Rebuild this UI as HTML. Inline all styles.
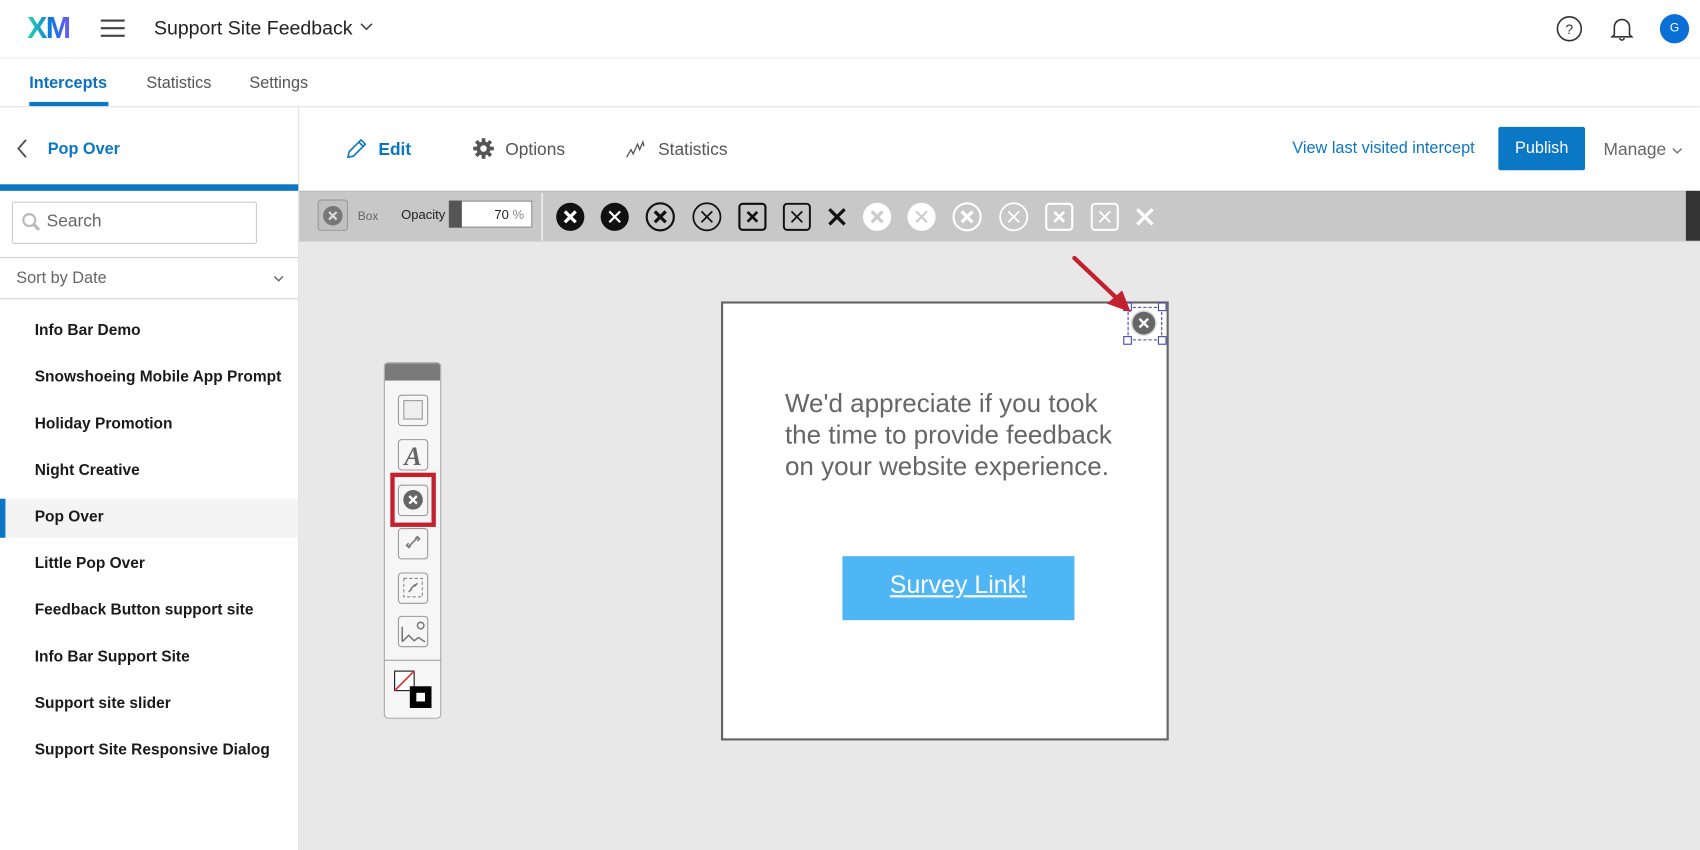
<!DOCTYPE html>
<html><head><meta charset="utf-8">
<style>
*{margin:0;padding:0;box-sizing:border-box}
html,body{width:1700px;height:850px;overflow:hidden;background:#fff}
body{font-family:"Liberation Sans",sans-serif}
#w{position:absolute;left:0;top:0;width:1568px;height:784px;transform:scale(1.08418);transform-origin:0 0;background:#fff}
.a{position:absolute}
.t{position:absolute;white-space:nowrap}
.li{position:absolute;left:32px;font-size:14.3px;font-weight:bold;color:#1a1a1a}
</style></head><body><div id="w">
<!-- top bar -->
<div class="t" style="left:25px;top:10px;font-size:28px;font-weight:bold;letter-spacing:-1.5px;background:linear-gradient(90deg,#21dbaa,#0b78e0 55%,#6b5cf0);-webkit-background-clip:text;color:transparent">XM</div>
<div class="a" style="left:93px;top:18px;width:22px;height:2px;background:#444"></div>
<div class="a" style="left:93px;top:25px;width:22px;height:2px;background:#444"></div>
<div class="a" style="left:93px;top:32px;width:22px;height:2px;background:#444"></div>
<div class="t" style="left:142px;top:16px;font-size:18px;color:#222">Support Site Feedback</div>
<svg class="a" style="left:331px;top:20px" width="14" height="10"><path d="M2 2l5 5 5-5" fill="none" stroke="#444" stroke-width="1.5"/></svg>
<svg class="a" style="left:1435px;top:14px" width="25" height="25"><circle cx="12.5" cy="12.5" r="11" fill="none" stroke="#333" stroke-width="1.5"/><text x="12.5" y="17.5" font-size="13" text-anchor="middle" fill="#333" font-family="Liberation Sans">?</text></svg>
<svg class="a" style="left:1485px;top:14px" width="22" height="25"><path d="M4 18V11a7 7 0 0 1 14 0v7l2 2H2z" fill="none" stroke="#333" stroke-width="1.5"/><path d="M9 21a2 2 0 0 0 4 0" fill="none" stroke="#333" stroke-width="1.5"/></svg>
<div class="a" style="left:1531px;top:13px;width:27px;height:27px;border-radius:50%;background:#0b6fd8;color:#fff;font-size:11px;text-align:center;line-height:27px">G</div>
<div class="a" style="left:0;top:53px;width:1568px;height:1px;background:#ececec"></div>
<!-- tabs -->
<div class="t" style="left:27px;top:68px;font-size:15px;font-weight:bold;color:#0b6fc4">Intercepts</div>
<div class="t" style="left:135px;top:68px;font-size:15px;color:#555">Statistics</div>
<div class="t" style="left:230px;top:68px;font-size:15px;color:#555">Settings</div>
<div class="a" style="left:27px;top:94px;width:73px;height:4px;background:#0b76c4"></div>
<div class="a" style="left:0;top:98px;width:1568px;height:1px;background:#e4e4e4"></div>
<!-- sidebar -->
<div class="a" style="left:275px;top:98px;width:1px;height:686px;background:#ddd"></div>
<svg class="a" style="left:14px;top:127px" width="14" height="20"><path d="M10 2L3 10l7 8" fill="none" stroke="#555" stroke-width="1.8"/></svg>
<div class="t" style="left:44px;top:129px;font-size:15px;font-weight:bold;color:#0b76c4">Pop Over</div>
<div class="a" style="left:0;top:170px;width:275px;height:6px;background:#0b76c4"></div>
<div class="a" style="left:11px;top:186px;width:226px;height:39px;border:1px solid #ccc;border-radius:2px"></div>
<svg class="a" style="left:19px;top:195px" width="20" height="20"><circle cx="8" cy="8" r="5.5" fill="none" stroke="#bbb" stroke-width="2"/><path d="M12 12l5 5" stroke="#bbb" stroke-width="3"/></svg>
<div class="t" style="left:43px;top:196px;font-size:16px;color:#666">Search</div>
<div class="a" style="left:0;top:237px;width:275px;height:1px;background:#d4d4d4"></div>
<div class="t" style="left:15px;top:248px;font-size:15px;color:#666">Sort by Date</div>
<svg class="a" style="left:251px;top:252px" width="12" height="10"><path d="M2 3l4 4 4-4" fill="none" stroke="#666" stroke-width="1.3"/></svg>
<div class="a" style="left:0;top:275px;width:275px;height:1px;background:#d4d4d4"></div>
<div class="a" style="left:0;top:460px;width:275px;height:36px;background:#f4f4f4"></div>
<div class="a" style="left:0;top:460px;width:5px;height:36px;background:#0b76c4"></div>
<div class="li" style="top:297px">Info Bar Demo</div>
<div class="li" style="top:340px">Snowshoeing Mobile App Prompt</div>
<div class="li" style="top:383px">Holiday Promotion</div>
<div class="li" style="top:426px">Night Creative</div>
<div class="li" style="top:469px">Pop Over</div>
<div class="li" style="top:512px">Little Pop Over</div>
<div class="li" style="top:555px">Feedback Button support site</div>
<div class="li" style="top:598px">Info Bar Support Site</div>
<div class="li" style="top:641px">Support site slider</div>
<div class="li" style="top:684px">Support Site Responsive Dialog</div>
<!-- main header -->
<svg class="a" style="left:318px;top:126px" width="22" height="22"><path d="M3 19l1-5L15 3l4 4L8 18z M13 5l4 4" fill="none" stroke="#0b76c4" stroke-width="1.5"/></svg>
<div class="t" style="left:349px;top:130px;font-size:16px;font-weight:bold;color:#0b76c4">Edit</div>
<svg class="a" style="left:436px;top:127px" width="20" height="20"><g fill="#555"><circle cx="10" cy="10" r="6.5"/><rect x="8.3" y="0.5" width="3.4" height="19"/><rect x="0.5" y="8.3" width="19" height="3.4"/><rect x="8.3" y="0.5" width="3.4" height="19" transform="rotate(45 10 10)"/><rect x="8.3" y="0.5" width="3.4" height="19" transform="rotate(-45 10 10)"/></g><circle cx="10" cy="10" r="3" fill="#fff"/></svg>
<div class="t" style="left:466px;top:130px;font-size:16px;color:#555">Options</div>
<svg class="a" style="left:577px;top:127px" width="22" height="20"><path d="M1 18l4-7 2 4 4-9 2 5 3-7 1 4" fill="none" stroke="#555" stroke-width="1.2"/></svg>
<div class="t" style="left:607px;top:130px;font-size:16px;color:#555">Statistics</div>
<div class="t" style="left:1192px;top:128px;font-size:15px;color:#0b76c4">View last visited intercept</div>
<div class="a" style="left:1382px;top:117px;width:80px;height:40px;background:#0b78c6;border-radius:2px;color:#fff;font-size:15px;text-align:center;line-height:40px">Publish</div>
<div class="t" style="left:1479px;top:130px;font-size:16px;color:#666">Manage</div>
<svg class="a" style="left:1541px;top:134px" width="12" height="10"><path d="M2 3l4 4 4-4" fill="none" stroke="#666" stroke-width="1.2"/></svg>
<!-- toolbar -->
<div class="a" style="left:276px;top:176px;width:1292px;height:47px;background:#c8c8c8;border-top:1px solid #bbb"></div>
<div class="a" style="left:1555px;top:176px;width:13px;height:46px;background:#333"></div>
<div class="a" style="left:276px;top:223px;width:1292px;height:561px;background:#e8e8e8"></div>
<div class="a" style="left:293px;top:184px;width:28px;height:29px;border:1px solid #999;border-radius:3px;background:#c0c0c0"></div>
<svg class="a" style="left:297px;top:189px" width="20" height="20"><circle cx="10" cy="10" r="9" fill="#777"/><path d="M6.5 6.5l7 7M13.5 6.5l-7 7" stroke="#ddd" stroke-width="2"/></svg>
<div class="t" style="left:330px;top:194px;font-size:11px;color:#666">Box</div>
<div class="t" style="left:370px;top:191px;font-size:12px;color:#222">Opacity</div>
<div class="a" style="left:414px;top:185px;width:77px;height:25px;background:#fff;border:1px solid #888"></div>
<div class="a" style="left:414px;top:185px;width:12px;height:25px;background:#555"></div>
<div class="t" style="left:456px;top:191px;font-size:12px;color:#222">70 <span style="color:#888">%</span></div>
<div class="a" style="left:499px;top:178px;width:2px;height:44px;background:#e6e6e6"></div>
<svg class="a" style="left:500px;top:185px" width="580" height="32">
<g transform="translate(26,15)"><circle r="13" fill="#111"/><path d="M-5 -5L5 5M5 -5L-5 5" stroke="#fff" stroke-width="3"/></g>
<g transform="translate(67,15)"><circle r="13" fill="#111"/><path d="M-5 -5L5 5M5 -5L-5 5" stroke="#fff" stroke-width="2"/></g>
<g transform="translate(109,15)"><circle r="12.5" fill="none" stroke="#111" stroke-width="2"/><path d="M-5 -5L5 5M5 -5L-5 5" stroke="#111" stroke-width="3"/></g>
<g transform="translate(152,15)"><circle r="12.5" fill="none" stroke="#111" stroke-width="1.6"/><path d="M-5 -5L5 5M5 -5L-5 5" stroke="#111" stroke-width="1.6"/></g>
<g transform="translate(194,15)"><rect x="-12" y="-12" width="24" height="24" rx="3" fill="none" stroke="#111" stroke-width="2"/><path d="M-4.5 -4.5L4.5 4.5M4.5 -4.5L-4.5 4.5" stroke="#111" stroke-width="2.5"/></g>
<g transform="translate(235,15)"><rect x="-12" y="-12" width="24" height="24" rx="3" fill="none" stroke="#111" stroke-width="1.8"/><path d="M-5 -5L5 5M5 -5L-5 5" stroke="#111" stroke-width="1.6"/></g>
<g transform="translate(272,15)"><path d="M-7 -7L7 7M7 -7L-7 7" stroke="#111" stroke-width="3"/></g>
<g transform="translate(309,15)"><circle r="13" fill="#fff"/><path d="M-5 -5L5 5M5 -5L-5 5" stroke="#ccc" stroke-width="3"/></g>
<g transform="translate(350,15)"><circle r="13" fill="#fff"/><path d="M-5 -5L5 5M5 -5L-5 5" stroke="#ccc" stroke-width="2"/></g>
<g transform="translate(392,15)"><circle r="12.5" fill="none" stroke="#fff" stroke-width="2"/><path d="M-5 -5L5 5M5 -5L-5 5" stroke="#fff" stroke-width="3"/></g>
<g transform="translate(435,15)"><circle r="12.5" fill="none" stroke="#fff" stroke-width="1.6"/><path d="M-5 -5L5 5M5 -5L-5 5" stroke="#fff" stroke-width="1.6"/></g>
<g transform="translate(477,15)"><rect x="-12" y="-12" width="24" height="24" rx="3" fill="none" stroke="#fff" stroke-width="2"/><path d="M-4.5 -4.5L4.5 4.5M4.5 -4.5L-4.5 4.5" stroke="#fff" stroke-width="2.5"/></g>
<g transform="translate(519,15)"><rect x="-12" y="-12" width="24" height="24" rx="3" fill="none" stroke="#fff" stroke-width="1.8"/><path d="M-5 -5L5 5M5 -5L-5 5" stroke="#fff" stroke-width="1.6"/></g>
<g transform="translate(556,15)"><path d="M-7 -7L7 7M7 -7L-7 7" stroke="#fff" stroke-width="3"/></g>
</svg>
<!-- palette -->
<div class="a" style="left:354px;top:334px;width:53px;height:329px;background:#f6f6f6;border:1px solid #aaa;border-radius:4px;overflow:hidden">
<div style="height:16px;background:#7a7a7a"></div></div>
<svg class="a" style="left:354px;top:350px" width="53" height="313">
<g fill="none" stroke="#999" stroke-width="1"><rect x="13.5" y="14.5" width="27" height="28" rx="3"/><rect x="18.5" y="19.5" width="17" height="17" fill="#eee"/>
<rect x="13.5" y="55.5" width="27" height="28" rx="3"/>
<rect x="13.5" y="97.5" width="27" height="28" rx="3"/>
<rect x="13.5" y="137.5" width="27" height="28" rx="3"/>
<rect x="13.5" y="178.5" width="27" height="28" rx="3"/><rect x="18.5" y="183.5" width="17" height="17" stroke-dasharray="3 2" stroke="#888"/>
<rect x="13.5" y="218.5" width="27" height="28" rx="3"/></g>
<text x="27" y="79" font-family="Liberation Serif" font-style="italic" font-weight="bold" font-size="24" fill="#666" text-anchor="middle">A</text>
<rect x="8" y="88" width="38" height="46" fill="none" stroke="#c4202e" stroke-width="4"/>
<circle cx="27" cy="111" r="9" fill="#666"/><path d="M23.5 107.5l7 7M30.5 107.5l-7 7" stroke="#fff" stroke-width="2.2"/>
<g fill="none" stroke="#777" stroke-width="1.4"><path d="M22 155l4-4M28 149l4-4M25 152l5-5M23 151l-2 2 2 2 2-2M31 149l2-2-2-2-2 2"/>
<path d="M23 196l3-3M28 191l3-3M25 193l4-4"/>
<path d="M17 242l6-6 5 5 4-3 6 4M17 242v-14" /><circle cx="34" cy="227" r="3"/></g>
<line x1="0" y1="259" x2="53" y2="259" stroke="#999"/>
<rect x="10" y="269" width="18" height="18" fill="#fff" stroke="#111"/><path d="M10 287l18-18" stroke="#d33" stroke-width="1.5"/>
<rect x="24" y="283" width="20" height="20" fill="#000"/><rect x="30" y="289" width="8" height="8" fill="#fff"/>
</svg>
<!-- popup -->
<div class="a" style="left:665px;top:278px;width:413px;height:405px;background:#fff;border:2px solid #666"></div>
<div class="t" style="left:724px;top:358px;font-size:24px;line-height:29px;color:#666">We'd appreciate if you took<br>the time to provide feedback<br>on your website experience.</div>
<div class="a" style="left:777px;top:513px;width:214px;height:59px;background:#4fb6f6;color:#fff;font-size:23px;text-align:center;line-height:53px;text-decoration:underline">Survey Link!</div>
<div class="a" style="left:1040px;top:283px;width:32px;height:31px;border:1px dashed #44a"></div>
<div class="a" style="left:1036px;top:279px;width:8px;height:8px;background:#fff;border:1px solid #44a"></div>
<div class="a" style="left:1068px;top:279px;width:8px;height:8px;background:#fff;border:1px solid #44a"></div>
<div class="a" style="left:1036px;top:310px;width:8px;height:8px;background:#fff;border:1px solid #44a"></div>
<div class="a" style="left:1068px;top:310px;width:8px;height:8px;background:#fff;border:1px solid #44a"></div>
<svg class="a" style="left:1040px;top:284px" width="30" height="30"><circle cx="15" cy="14" r="12" fill="#ddd"/><circle cx="15" cy="14" r="10.5" fill="#666"/><path d="M11 10l8 8M19 10l-8 8" stroke="#fff" stroke-width="2.2"/></svg>
<svg class="a" style="left:985px;top:232px" width="65" height="62"><path d="M6 6L46 44" stroke="#c4202e" stroke-width="4" stroke-linecap="round"/><path d="M58 56L36 48L50 36z" fill="#c4202e"/></svg>
</div></body></html>
